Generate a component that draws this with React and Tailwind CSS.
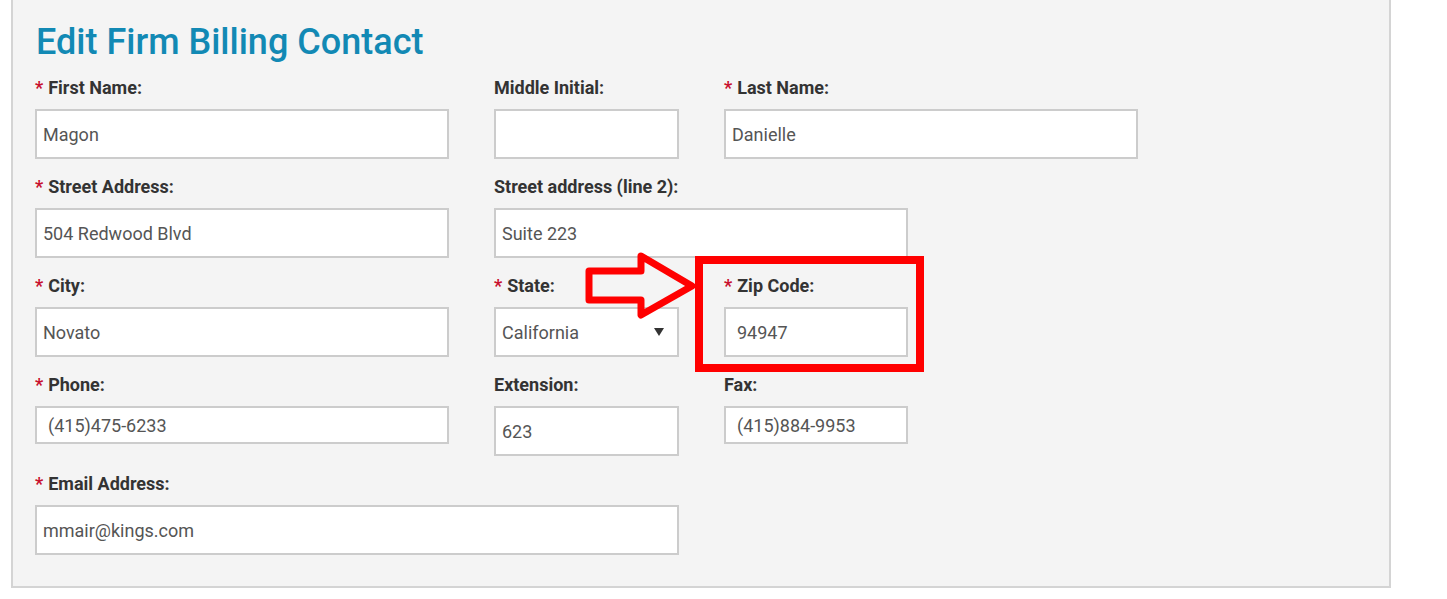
import React from "react";

function Field({ label, required, value, width, height = 50, pad = 6, select }) {
  return (
    <div className="flex flex-col" style={{ width }}>
      <div className="h-[20px] leading-[20px] text-[18px] font-bold text-[#333] whitespace-nowrap">
        {required && <span className="text-[#c8102e] mr-[5px]">*</span>}
        {label}
      </div>
      <div
        className="mt-[11px] relative flex items-center bg-white border-2 border-[#cccccc] text-[18px] text-[#555]"
        style={{ height, paddingLeft: pad }}
      >
        <span className="mt-[1px]">{value}</span>
        {select && (
          <svg className="absolute right-[13px] top-1/2 -translate-y-1/2" width="10" height="8" viewBox="0 0 10 8">
            <path d="M0 0 H10 L5 8 Z" fill="#333" />
          </svg>
        )}
      </div>
    </div>
  );
}

export default function App() {
  return (
    <div className="w-[1447px] h-[599px] bg-white relative overflow-hidden" style={{ fontFamily: "Roboto, 'Liberation Sans', sans-serif" }}>
      <div className="ml-[11px] w-[1380px] h-[588px] bg-[#f4f4f4] border-2 border-t-0 border-[#d4d4d4] pl-[22px] pt-[22px]">
        <h1 className="text-[36px] leading-[40px] font-medium text-[#1289b4] ml-[1px]">Edit Firm Billing Contact</h1>
        <div className="mt-[16px] flex flex-col gap-[18px]">
          <div className="flex gap-[45px] items-start">
            <Field required label="First Name:" value="Magon" width={414} />
            <Field label="Middle Initial:" value="" width={185} />
            <Field required label="Last Name:" value="Danielle" width={414} />
          </div>
          <div className="flex gap-[45px] items-start">
            <Field required label="Street Address:" value="504 Redwood Blvd" width={414} />
            <Field label="Street address (line 2):" value="Suite 223" width={414} />
          </div>
          <div className="flex gap-[45px] items-start">
            <Field required label="City:" value="Novato" width={414} />
            <Field required label="State:" value="California" width={185} select />
            <Field required label="Zip Code:" value="94947" width={184} pad={11} />
          </div>
          <div className="flex gap-[45px] items-start">
            <Field required label="Phone:" value="(415)475-6233" width={414} height={38} pad={11} />
            <Field label="Extension:" value="623" width={185} />
            <Field label="Fax:" value="(415)884-9953" width={184} height={38} pad={11} />
          </div>
          <div className="flex gap-[45px] items-start">
            <Field required label="Email Address:" value="mmair@kings.com" width={644} />
          </div>
        </div>
      </div>

      {/* annotation: red box */}
      <div className="absolute left-[695px] top-[256px] w-[229px] h-[116px] border-[8px] border-[#ff0000]" />
      {/* annotation: arrow */}
      <svg className="absolute left-[580px] top-[248px]" width="120" height="76" viewBox="580 248 120 76">
        <path
          d="M589 271 H641 V256 L692 286 L641 315 V300 H589 Z"
          fill="none"
          stroke="#ff0000"
          strokeWidth="7"
          strokeLinejoin="round"
        />
      </svg>
    </div>
  );
}
